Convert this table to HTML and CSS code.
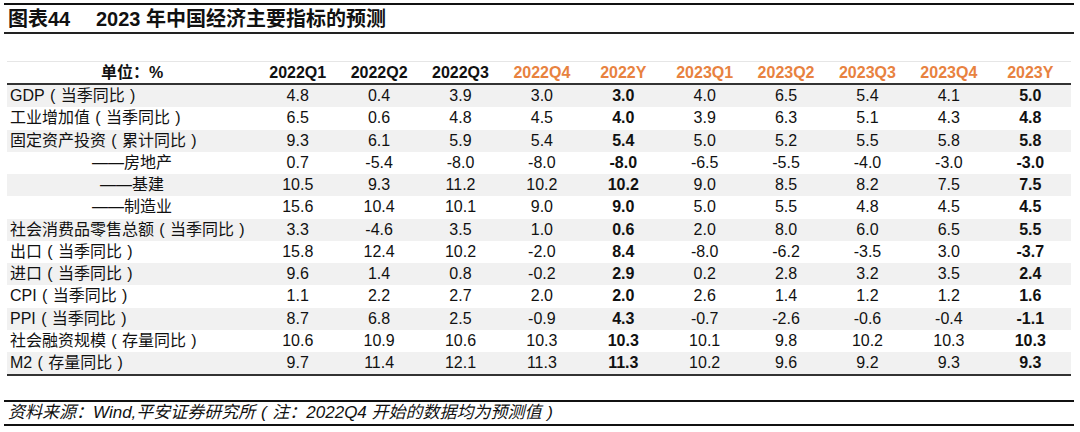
FILE: index.html
```html
<!DOCTYPE html>
<html lang="zh">
<head>
<meta charset="utf-8">
<link rel="stylesheet" href="styles.css">
</head>
<body>
<div class="page">
  <h1 class="title"><span class="fig">图表44</span><span class="name">2023 年中国经济主要指标的预测</span></h1>
  <table class="data">
    <thead>
      <tr>
        <th class="label-h">单位：%</th>
        <th>2022Q1</th><th>2022Q2</th><th>2022Q3</th>
        <th class="fc">2022Q4</th><th class="fc">2022Y</th><th class="fc">2023Q1</th><th class="fc">2023Q2</th><th class="fc">2023Q3</th><th class="fc">2023Q4</th><th class="fc">2023Y</th>
      </tr>
    </thead>
    <tbody>
      <tr><td class="lbl">GDP<span class="p">(</span>当季同比<span class="p">)</span></td><td>4.8</td><td>0.4</td><td>3.9</td><td>3.0</td><td class="b">3.0</td><td>4.0</td><td>6.5</td><td>5.4</td><td>4.1</td><td class="b">5.0</td></tr>
      <tr><td class="lbl">工业增加值<span class="p">(</span>当季同比<span class="p">)</span></td><td>6.5</td><td>0.6</td><td>4.8</td><td>4.5</td><td class="b">4.0</td><td>3.9</td><td>6.3</td><td>5.1</td><td>4.3</td><td class="b">4.8</td></tr>
      <tr><td class="lbl">固定资产投资<span class="p">(</span>累计同比<span class="p">)</span></td><td>9.3</td><td>6.1</td><td>5.9</td><td>5.4</td><td class="b">5.4</td><td>5.0</td><td>5.2</td><td>5.5</td><td>5.8</td><td class="b">5.8</td></tr>
      <tr><td class="sub">——房地产</td><td>0.7</td><td>-5.4</td><td>-8.0</td><td>-8.0</td><td class="b">-8.0</td><td>-6.5</td><td>-5.5</td><td>-4.0</td><td>-3.0</td><td class="b">-3.0</td></tr>
      <tr><td class="sub">——基建</td><td>10.5</td><td>9.3</td><td>11.2</td><td>10.2</td><td class="b">10.2</td><td>9.0</td><td>8.5</td><td>8.2</td><td>7.5</td><td class="b">7.5</td></tr>
      <tr><td class="sub">——制造业</td><td>15.6</td><td>10.4</td><td>10.1</td><td>9.0</td><td class="b">9.0</td><td>5.0</td><td>5.5</td><td>4.8</td><td>4.5</td><td class="b">4.5</td></tr>
      <tr><td class="lbl">社会消费品零售总额<span class="p">(</span>当季同比<span class="p">)</span></td><td>3.3</td><td>-4.6</td><td>3.5</td><td>1.0</td><td class="b">0.6</td><td>2.0</td><td>8.0</td><td>6.0</td><td>6.5</td><td class="b">5.5</td></tr>
      <tr><td class="lbl">出口<span class="p">(</span>当季同比<span class="p">)</span></td><td>15.8</td><td>12.4</td><td>10.2</td><td>-2.0</td><td class="b">8.4</td><td>-8.0</td><td>-6.2</td><td>-3.5</td><td>3.0</td><td class="b">-3.7</td></tr>
      <tr><td class="lbl">进口<span class="p">(</span>当季同比<span class="p">)</span></td><td>9.6</td><td>1.4</td><td>0.8</td><td>-0.2</td><td class="b">2.9</td><td>0.2</td><td>2.8</td><td>3.2</td><td>3.5</td><td class="b">2.4</td></tr>
      <tr><td class="lbl">CPI<span class="p">(</span>当季同比<span class="p">)</span></td><td>1.1</td><td>2.2</td><td>2.7</td><td>2.0</td><td class="b">2.0</td><td>2.6</td><td>1.4</td><td>1.2</td><td>1.2</td><td class="b">1.6</td></tr>
      <tr><td class="lbl">PPI<span class="p">(</span>当季同比<span class="p">)</span></td><td>8.7</td><td>6.8</td><td>2.5</td><td>-0.9</td><td class="b">4.3</td><td>-0.7</td><td>-2.6</td><td>-0.6</td><td>-0.4</td><td class="b">-1.1</td></tr>
      <tr><td class="lbl">社会融资规模<span class="p">(</span>存量同比<span class="p">)</span></td><td>10.6</td><td>10.9</td><td>10.6</td><td>10.3</td><td class="b">10.3</td><td>10.1</td><td>9.8</td><td>10.2</td><td>10.3</td><td class="b">10.3</td></tr>
      <tr><td class="lbl">M2<span class="p">(</span>存量同比<span class="p">)</span></td><td>9.7</td><td>11.4</td><td>12.1</td><td>11.3</td><td class="b">11.3</td><td>10.2</td><td>9.6</td><td>9.2</td><td>9.3</td><td class="b">9.3</td></tr>
    </tbody>
  </table>
  <p class="source">资料来源：Wind,平安证券研究所<span class="p">(</span>注：2022Q4 开始的数据均为预测值<span class="p">)</span></p>
</div>
</body>
</html>
```

FILE: styles.css
```css
html, body {
  margin: 0;
  padding: 0;
  background: #ffffff;
}

body {
  font-family: "Liberation Sans", Arial, "Noto Sans CJK SC", sans-serif;
  color: #111;
}

.page {
  padding: 3px 6px 0 4px;
}

.title {
  margin: 0;
  height: 27px;
  border-top: 2px solid #111;
  border-bottom: 2px solid #222;
  font-size: 20px;
  line-height: 29px;
  font-weight: bold;
  padding-left: 4px;
  display: flex;
  white-space: nowrap;
}

.title .fig {
  width: 88px;
}

.p {
  display: inline-block;
  width: 1em;
  text-align: center;
}

.data {
  margin: 27px 0 0 3px;
  width: 1064px;
  border-collapse: collapse;
  table-layout: fixed;
  font-size: 16px;
}

.data th {
  height: 21px;
  padding: 0;
  font-weight: bold;
  text-align: center;
  border-top: 1px solid #e6e6e6;
  border-bottom: 2px solid #333;
  width: 81.4px;
  line-height: 20px;
  white-space: nowrap;
}

.data th.label-h {
  width: 250px;
}

.data th.fc {
  color: #e8823f;
}

.data td {
  height: 22.25px;
  padding: 0;
  text-align: center;
  line-height: 20px;
  white-space: nowrap;
}

.data tbody tr:nth-child(odd) {
  background: #f1f1f1;
}

.data tbody tr:last-child td {
  border-bottom: 2px solid #333;
}

.data td.lbl {
  text-align: left;
  padding-left: 3px;
}

.data td.sub {
  text-align: center;
}

.data td.b {
  font-weight: bold;
}

.source {
  margin: 24px 0 0 0;
  height: 22px;
  border-top: 2px solid #111;
  border-bottom: 2px solid #111;
  font-style: italic;
  font-size: 17px;
  line-height: 22px;
  padding-left: 4px;
  white-space: nowrap;
}
```
